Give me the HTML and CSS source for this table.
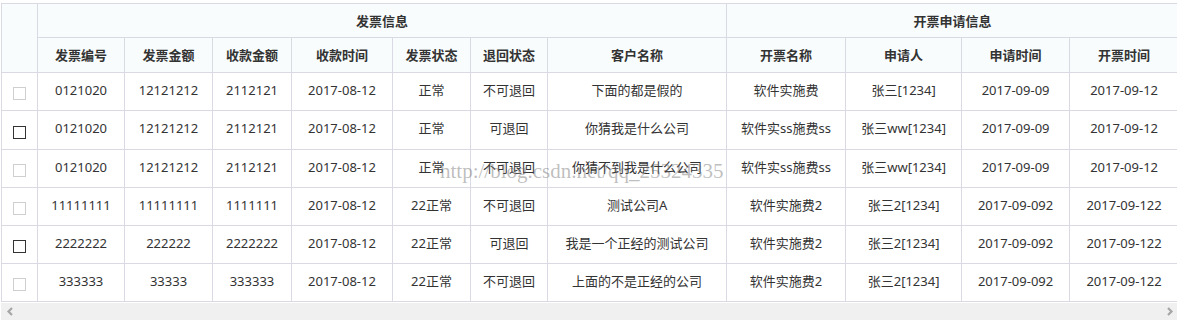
FILE: index.html
```html
<!DOCTYPE html>
<html lang="zh-CN">
<head>
<meta charset="utf-8">
<title>发票列表</title>
<link rel="stylesheet" href="styles.css">
</head>
<body>
<div class="grid">
  <div class="viewport">
    <table class="tbl">
      <colgroup>
        <col class="c-chk">
        <col class="c-no">
        <col class="c-amt">
        <col class="c-rec">
        <col class="c-time">
        <col class="c-st">
        <col class="c-ret">
        <col class="c-cust">
        <col class="c-name">
        <col class="c-app">
        <col class="c-at">
        <col class="c-it">
      </colgroup>
      <thead>
        <tr class="h1">
          <th rowspan="2"></th>
          <th colspan="7">发票信息</th>
          <th colspan="4">开票申请信息</th>
        </tr>
        <tr class="h2">
          <th>发票编号</th>
          <th>发票金额</th>
          <th>收款金额</th>
          <th>收款时间</th>
          <th>发票状态</th>
          <th>退回状态</th>
          <th>客户名称</th>
          <th>开票名称</th>
          <th>申请人</th>
          <th>申请时间</th>
          <th>开票时间</th>
        </tr>
      </thead>
      <tbody>
        <tr>
          <td class="chk"><span class="cb cb-off"></span></td>
          <td>0121020</td><td>12121212</td><td>2112121</td><td>2017-08-12</td><td>正常</td><td>不可退回</td><td>下面的都是假的</td><td>软件实施费</td><td>张三[1234]</td><td>2017-09-09</td><td>2017-09-12</td>
        </tr>
        <tr class="tall">
          <td class="chk"><span class="cb cb-on"></span></td>
          <td>0121020</td><td>12121212</td><td>2112121</td><td>2017-08-12</td><td>正常</td><td>可退回</td><td>你猜我是什么公司</td><td>软件实ss施费ss</td><td>张三ww[1234]</td><td>2017-09-09</td><td>2017-09-12</td>
        </tr>
        <tr>
          <td class="chk"><span class="cb cb-off"></span></td>
          <td>0121020</td><td>12121212</td><td>2112121</td><td>2017-08-12</td><td>正常</td><td>不可退回</td><td>你猜不到我是什么公司</td><td>软件实ss施费ss</td><td>张三ww[1234]</td><td>2017-09-09</td><td>2017-09-12</td>
        </tr>
        <tr>
          <td class="chk"><span class="cb cb-off"></span></td>
          <td>11111111</td><td>11111111</td><td>1111111</td><td>2017-08-12</td><td>22正常</td><td>不可退回</td><td>测试公司A</td><td>软件实施费2</td><td>张三2[1234]</td><td>2017-09-092</td><td>2017-09-122</td>
        </tr>
        <tr>
          <td class="chk"><span class="cb cb-on"></span></td>
          <td>2222222</td><td>222222</td><td>2222222</td><td>2017-08-12</td><td>22正常</td><td>可退回</td><td>我是一个正经的测试公司</td><td>软件实施费2</td><td>张三2[1234]</td><td>2017-09-092</td><td>2017-09-122</td>
        </tr>
        <tr>
          <td class="chk"><span class="cb cb-off"></span></td>
          <td>333333</td><td>33333</td><td>333333</td><td>2017-08-12</td><td>22正常</td><td>不可退回</td><td>上面的不是正经的公司</td><td>软件实施费2</td><td>张三2[1234]</td><td>2017-09-092</td><td>2017-09-122</td>
        </tr>
      </tbody>
    </table>
    <div class="watermark">http://blog.csdn.net/qq_25324335</div>
  </div>
  <div class="hscroll">
    <svg class="arrow" width="8" height="9" viewBox="0 0 8 9"><polyline points="6,1 2.5,4.5 6,8" fill="none" stroke="#a6a6a6" stroke-width="2.2"/></svg>
    <svg class="arrow" width="8" height="9" viewBox="0 0 8 9"><polyline points="2,1 5.5,4.5 2,8" fill="none" stroke="#a6a6a6" stroke-width="2.2"/></svg>
  </div>
</div>
</body>
</html>
```

FILE: styles.css
```css
html, body {
  margin: 0;
  padding: 0;
  background: #fff;
}

body {
  font-family: "Noto Sans", "Noto Sans CJK SC", sans-serif;
  font-size: 13px;
  color: #333;
}

.grid {
  margin: 3px 0 0 1px;
  width: 1176px;
}

.viewport {
  position: relative;
  overflow: hidden;
  width: 1176px;
}

.tbl {
  table-layout: fixed;
  border-collapse: separate;
  border-spacing: 0;
  width: 1177px;
  border-left: 1px solid #d9dae3;
  border-top: 1px solid #d9dae3;
}

.c-chk { width: 36px; }
.c-no { width: 87px; }
.c-amt { width: 88px; }
.c-rec { width: 79px; }
.c-time { width: 101px; }
.c-st { width: 78px; }
.c-ret { width: 77px; }
.c-cust { width: 179px; }
.c-name { width: 119px; }
.c-app { width: 116px; }
.c-at { width: 108px; }
.c-it { width: 109px; }

.tbl th,
.tbl td {
  box-sizing: border-box;
  padding: 0;
  border-right: 1px solid #d9dae3;
  border-bottom: 1px solid #d9dae3;
  text-align: center;
  vertical-align: middle;
  white-space: nowrap;
  overflow: hidden;
  line-height: 18px;
}

.tbl td {
  padding-bottom: 4px;
}

.tbl td.chk {
  padding-bottom: 0;
}

.tbl th {
  background: #f8fcfc;
  font-weight: bold;
  color: #333;
}

.h1 th { height: 34px; }
.h2 th { height: 35px; }
.tbl tbody td { height: 38px; }
.tbl tbody tr.tall td { height: 39px; }

.cb {
  display: inline-block;
  box-sizing: border-box;
  width: 13px;
  height: 13px;
  vertical-align: middle;
  background: #fff;
  margin-top: 1px;
}

.cb-off { border: 1px solid #cfcfcf; }
.cb-on { border: 1px solid #333; }

.watermark {
  position: absolute;
  left: 439px;
  top: 158px;
  font-family: "Liberation Serif", serif;
  font-size: 21px;
  line-height: 21px;
  color: rgba(110, 110, 110, 0.45);
  white-space: nowrap;
  pointer-events: none;
}

.hscroll {
  margin-top: 1px;
  height: 17px;
  background: #f0f0f0;
  display: flex;
  align-items: center;
  justify-content: space-between;
  padding: 0 3px 0 5px;
}

.arrow {
  display: block;
}
```
